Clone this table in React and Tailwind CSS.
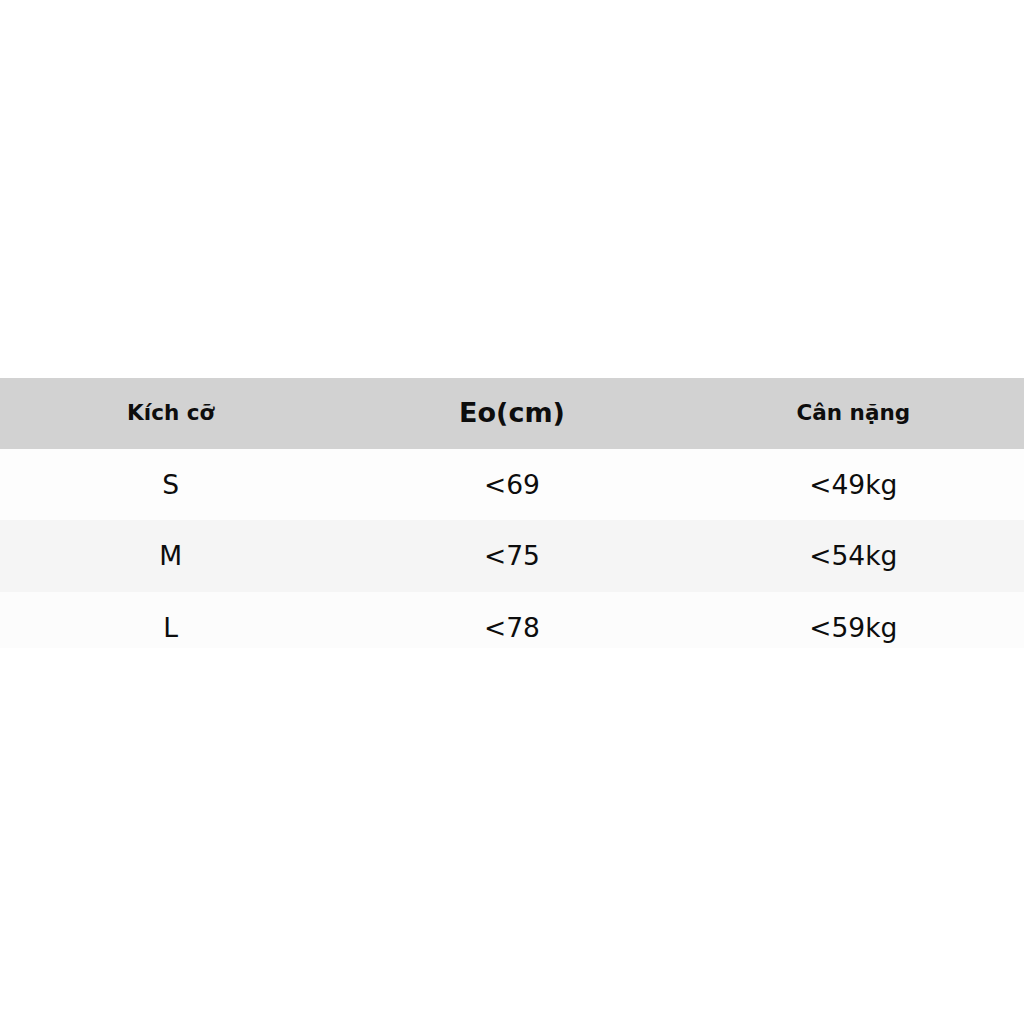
export default function App() {
  const rows = [
    ["S", "<69", "<49kg"],
    ["M", "<75", "<54kg"],
    ["L", "<78", "<59kg"],
  ]
  const rowBg = ["bg-[#fdfdfd]", "bg-[#f5f5f5]", "bg-[#fcfcfc]"]

  return (
    <div
      className="h-screen w-full bg-white flex flex-col justify-center pt-[2px] text-[#0d0d0d]"
      style={{ fontFamily: '"DejaVu Sans", Verdana, sans-serif' }}
    >
      <div className="grid grid-cols-3 h-[71px] bg-[#d2d2d2] items-center text-center font-bold">
        <div className="text-[21.5px]">Kích cỡ</div>
        <div className="text-[27px]">Eo(cm)</div>
        <div className="text-[21.5px]">Cân nặng</div>
      </div>
      {rows.map((r, i) => (
        <div
          key={r[0]}
          className={`grid grid-cols-3 items-start text-center text-[26.5px] ${rowBg[i]} ${
            i === 2 ? "h-[56px]" : "h-[71px]"
          } ${i === 1 ? "h-[72px]" : ""}`}
        >
          {r.map((c, j) => (
            <div key={j} className="h-[71px] flex items-center justify-center">
              {c}
            </div>
          ))}
        </div>
      ))}
    </div>
  )
}
